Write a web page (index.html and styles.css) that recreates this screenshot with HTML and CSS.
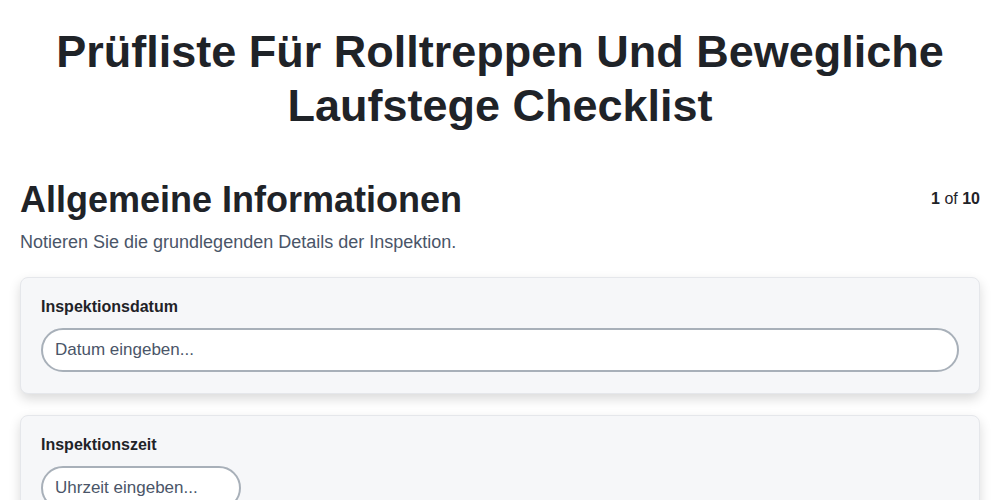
FILE: index.html
```html
<!DOCTYPE html>
<html lang="de">
<head>
    <meta charset="UTF-8">
    <meta name="viewport" content="width=device-width, initial-scale=1.0">
    <title>Prüfliste Für Rolltreppen Und Bewegliche Laufstege Checklist</title>
    <link rel="stylesheet" href="styles.css">
</head>
<body>
    <div class="page">
        <h1 class="page-title">Prüfliste Für Rolltreppen Und Bewegliche Laufstege Checklist</h1>

        <div class="section-head">
            <h2>Allgemeine Informationen</h2>
            <span class="step"><b>1</b> of <b>10</b></span>
        </div>
        <p class="section-desc">Notieren Sie die grundlegenden Details der Inspektion.</p>

        <!-- Felder -->
        <div class="field-card">
            <label for="datum">Inspektionsdatum</label>
            <input type="text" id="datum" class="text-input" placeholder="Datum eingeben...">
        </div>
        <div class="field-card">
            <label for="zeit">Inspektionszeit</label>
            <input type="text" id="zeit" class="text-input short" placeholder="Uhrzeit eingeben...">
        </div>
    </div>
</body>
</html>
```

FILE: styles.css
```css
body {
    font-family: "Liberation Sans", Arial, sans-serif;
    margin: 0;
    padding: 0;
    background: #fff;
    color: #1f2328;
}

.page {
    padding: 20px 20px;
}

.page-title {
    text-align: center;
    font-size: 45px;
    line-height: 54px;
    margin: 5px 20px 45px;
    color: #1f2328;
}

.section-head {
    display: flex;
    justify-content: space-between;
    align-items: flex-start;
}

.section-head h2 {
    margin: 0;
    font-size: 36px;
    line-height: 44px;
}

.step {
    font-size: 16px;
    margin-top: 12px;
    color: #1f2328;
}

.section-desc {
    margin: 10px 0 24px;
    font-size: 18px;
    line-height: 21px;
    color: #4a5568;
}

.field-card {
    background: #f6f7f9;
    border: 1px solid #e5e7eb;
    border-radius: 8px;
    padding: 20px 20px 21px;
    margin-bottom: 21px;
    box-shadow: 0 5px 12px rgba(0, 0, 0, 0.15);
}

.field-card label {
    display: block;
    font-size: 16px;
    font-weight: bold;
    margin-bottom: 12px;
}

.text-input {
    display: block;
    box-sizing: border-box;
    width: 100%;
    height: 44px;
    padding: 0 12px;
    border: 2px solid #a8b0b9;
    border-radius: 22px;
    background: #fff;
    font-family: inherit;
    font-size: 17px;
    color: #1f2328;
}

.text-input::placeholder {
    color: #4a5568;
}

.text-input.short {
    width: 200px;
}
```
